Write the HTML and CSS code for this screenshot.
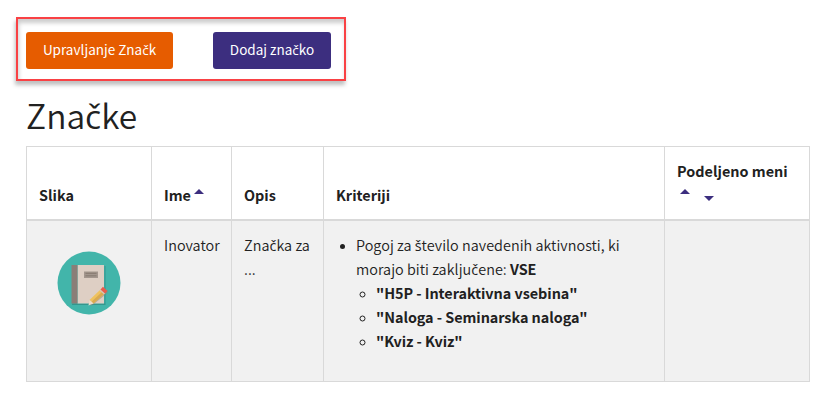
FILE: index.html
```
<!DOCTYPE html>
<html lang="sl">
<head>
  <meta charset="UTF-8">
  <title>Značke</title>
  <meta name="viewport" content="width=device-width, initial-scale=1.0">
  <link rel="stylesheet" href="styles.css">
</head>
<body>

<div class="actions">
  <button class="btn btn-manage">Upravljanje Zna<span class="caron">č</span>k</button>
  <button class="btn btn-add">Dodaj zna<span class="caron">č</span>ko</button>
</div>

<h2>Zna<span class="caron">č</span>ke</h2>

<table class="badges">
  <colgroup>
    <col class="col-image">
    <col class="col-name">
    <col class="col-desc">
    <col class="col-criteria">
    <col class="col-issued">
  </colgroup>
  <thead>
    <tr>
      <th>Slika</th>
      <th>Ime<svg class="sort sort-name" viewBox="0 0 10 5"><path d="M0 5 5 0l5 5z"/></svg></th>
      <th>Opis</th>
      <th>Kriteriji</th>
      <th>
        Podeljeno meni
        <div class="sort-row">
          <svg class="sort" viewBox="0 0 10 5"><path d="M0 5 5 0l5 5z"/></svg>
          <svg class="sort sort-down" viewBox="0 0 10 5"><path d="M0 0h10L5 5z"/></svg>
        </div>
      </th>
    </tr>
  </thead>
  <tbody>
    <tr>
      <td>
        <svg class="badge-img" viewBox="0 0 64 64">
          <circle cx="32" cy="32" r="31.5" fill="#42b5aa"/>
          <path d="M15 52.500h32.500V15h1v39H15z" fill="#35968d"/>
          <path d="M20.500 14H47v38.500H20.500z" fill="#decfc4"/>
          <path d="M14.500 14h6v38.500h-6z" fill="#8b7e77"/>
          <path d="M27 20.500h14v6.500H27z" fill="#a3968d"/>
          <path d="M28.500 22.300h11M28.500 24.800h11" stroke="#85796f"/>
          <path d="M33 54.500 50.500 39v3L35 54.500z" fill="#8f8478" opacity=".5"/>
          <path d="M43.500 38.500 47.500 42.500 36.500 52.500 32.500 49z" fill="#efc25e"/>
          <path d="M45.500 40.500 47.500 42.500 36.500 52.500 34.500 50.800z" fill="#d9aa50"/>
          <path d="M32.500 49 36.500 52.500 31.500 54.500z" fill="#ecdcca"/>
          <path d="M42.500 39.500 44 38 48.500 42 47 43.500z" fill="#d6c8b8"/>
          <path d="M43.500 38.500 46 35.800 50.500 40 48 42.500z" fill="#e95c4c"/>
        </svg>
      </td>
      <td>Inovator</td>
      <td>Zna<span class="caron">č</span>ka za ...</td>
      <td>
        <ul>
          <li>Pogoj za <span class="caron">š</span>tevilo navedenih aktivnosti, ki morajo biti zaklju<span class="caron">č</span>ene: <b>VSE</b>
            <ul>
              <li><b>"H5P - Interaktivna vsebina"</b></li>
              <li><b>"Naloga - Seminarska naloga"</b></li>
              <li><b>"Kviz - Kviz"</b></li>
            </ul>
          </li>
        </ul>
      </td>
      <td></td>
    </tr>
  </tbody>
</table>

</body>
</html>
```
FILE: styles.css
```
* {
  box-sizing: border-box;
}

body {
  margin: 0;
  padding: 17px 28px 0 26px;
  font-family: "Noto Sans CJK SC", "Open Sans", sans-serif;
  font-size: 14.4px;
  font-weight: 350;
  line-height: 24px;
  color: #212121;
  background: #fff;
}

.caron {
  font-family: "Open Sans", sans-serif;
  font-weight: 380;
  line-height: 1;
}

/* Buttons */
.actions {
  display: flex;
  gap: 40px;
  width: 330px;
  height: 64px;
  margin-left: -10px;
  padding: 13px 8px;
  border: 2px solid #f94144;
  box-shadow: -1px 4px 4px rgba(0,0,0,0.25), inset 1px 4px 4px rgba(0,0,0,0.2);
}

.btn {
  height: 37px;
  padding: 0 0 2px;
  border: none;
  border-radius: 3px;
  font-family: inherit;
  font-size: 13.5px;
  font-weight: 400;
  line-height: 33px;
  color: #fff;
}

.btn .caron {
  font-weight: 400;
}

.btn-manage {
  width: 147px;
  background: #e65c00;
}

.btn-add {
  width: 118px;
  background: #3c2e7f;
}

h2 {
  margin: 12px 0 9px;
  font-size: 33.5px;
  font-weight: 350;
  line-height: 44px;
}

/* Badge table */
.badges {
  width: 784px;
  table-layout: fixed;
  border-collapse: collapse;
}

.col-image { width: 125px; }
.col-name { width: 80px; }
.col-desc { width: 92px; }
.col-criteria { width: 341px; }
.col-issued { width: 145px; }

.badges th, .badges td {
  padding: 12px;
  border: 1px solid #d9d9d9;
  text-align: left;
  vertical-align: top;
}

.badges td {
  letter-spacing: 0.03px;
}

.badges th {
  height: 73px;
  border-bottom-width: 2px;
  vertical-align: bottom;
  font-weight: 700;
  white-space: nowrap;
}

.badges tbody tr {
  height: 161px;
  background: #f1f1f1;
}

.sort {
  width: 10px;
  height: 5px;
  fill: #3c2e7f;
}

.sort-name {
  margin-left: 3px;
  vertical-align: 7px;
}

.sort-row {
  display: flex;
  align-items: flex-start;
  gap: 14px;
  height: 24px;
  padding: 6px 0 0 3px;
}

.sort-down {
  margin-top: 7px;
}

.badge-img {
  display: block;
  width: 64px;
  height: 64px;
  margin: 18px auto 0;
}

ul {
  margin: 0;
  padding-left: 20px;
}

li::marker {
  font-family: "Open Sans", sans-serif;
  font-size: 13px;
}

b {
  font-weight: 700;
  letter-spacing: -0.05px;
}
```
